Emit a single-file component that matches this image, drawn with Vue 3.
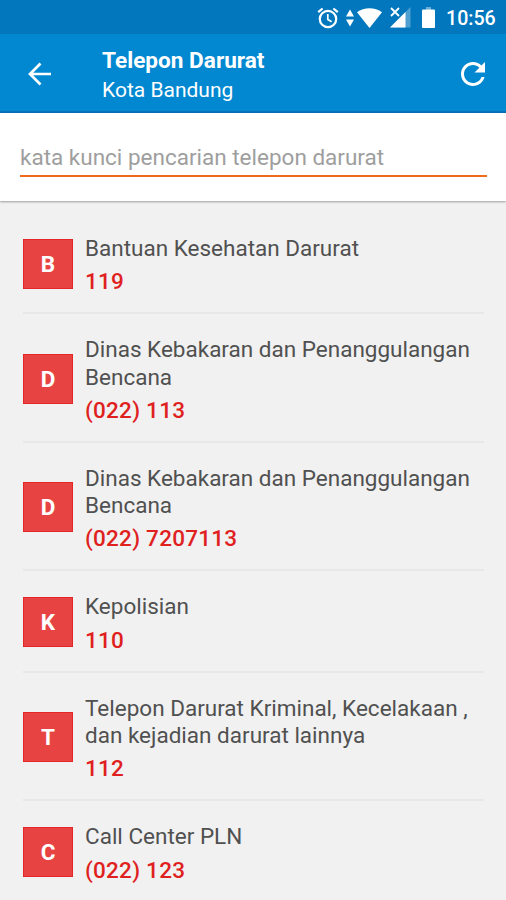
<template>
  <div class="screen">
    <div class="status-bar">
      <svg class="alarm" width="22" height="22" viewBox="0 0 22 22">
        <circle cx="11" cy="12" r="8.2" fill="none" stroke="#fff" stroke-width="2.2" />
        <path d="M1.2 5.2L5.6 1.5M20.8 5.2L16.4 1.5" stroke="#fff" stroke-width="2.2" />
        <path d="M10.8 7v5.4l3.8 2.3" fill="none" stroke="#fff" stroke-width="1.7" />
      </svg>
      <svg class="data" width="8" height="18" viewBox="0 0 8 18">
        <path d="M4 0.500L8 7.500H0zM4 17.500L8 10.500H0z" fill="#fff" />
      </svg>
      <svg class="wifi" width="25" height="20" viewBox="0 0 25 20">
        <path d="M0 4.2C7-1.1 18-1.1 25 4.2L12.5 20z" fill="#fff" />
      </svg>
      <svg class="signal" width="21" height="21" viewBox="0 0 21 21">
        <path d="M20.5 0V20.5H0z" fill="#fff" fill-opacity=".3" />
        <path d="M15.5 5V20.5H0z" fill="#fff" />
        <path d="M1 1l8 8M9 1l-8 8" stroke="#0277bd" stroke-width="4" />
        <path d="M1 1l8 8M9 1l-8 8" stroke="#fff" stroke-width="1.8" />
      </svg>
      <svg class="battery" width="13" height="21" viewBox="0 0 13 21">
        <path d="M4 0h5v3H4z" fill="#fff" fill-opacity=".4" />
        <path d="M1 2.500h11q1 0 1 1V20q0 1-1 1H1q-1 0-1-1V3.500q0-1 1-1z" fill="#fff" />
      </svg>
      <span class="time">10:56</span>
    </div>
    <header class="toolbar">
      <button class="back" aria-label="Kembali">
        <svg width="24" height="24" viewBox="0 0 24 24">
          <path d="M12.500 1.500L2 12l10.500 10.500M2 12h21" fill="none" stroke="#fff" stroke-width="2.700" />
        </svg>
      </button>
      <div class="heading">
        <h1>Telepon Darurat</h1>
        <p>Kota Bandung</p>
      </div>
      <button class="refresh" aria-label="Muat ulang">
        <svg width="24" height="24" viewBox="4 4 16 16">
          <path
            d="M17.650 6.350C16.200 4.900 14.210 4 12 4c-4.420 0-7.990 3.580-7.990 8s3.570 8 7.990 8c3.730 0 6.840-2.550 7.730-6h-2.080c-.820 2.330-3.040 4-5.650 4-3.310 0-6-2.690-6-6s2.690-6 6-6c1.660 0 3.140.690 4.220 1.780L13 11h7V4l-2.350 2.350z"
            fill="#fff"
          />
        </svg>
      </button>
    </header>
    <div class="search">
      <input v-model="keyword" type="text" placeholder="kata kunci pencarian telepon darurat" />
    </div>
    <ul class="list">
      <li v-for="(item, i) in filtered" :key="i">
        <span class="avatar">{{ item.name.charAt(0) }}</span>
        <div class="info">
          <div class="name">{{ item.name }}</div>
          <div class="phone">{{ item.phone }}</div>
        </div>
      </li>
    </ul>
  </div>
</template>

<script setup>
import { computed, ref } from 'vue'

const keyword = ref('')
const contacts = ref([
  { name: 'Bantuan Kesehatan Darurat', phone: '119' },
  { name: 'Dinas Kebakaran dan Penanggulangan Bencana', phone: '(022) 113' },
  { name: 'Dinas Kebakaran dan Penanggulangan Bencana', phone: '(022) 7207113' },
  { name: 'Kepolisian', phone: '110' },
  { name: 'Telepon Darurat Kriminal, Kecelakaan , dan kejadian darurat lainnya', phone: '112' },
  { name: 'Call Center PLN', phone: '(022) 123' },
])

const filtered = computed(() => {
  const key = keyword.value.toLowerCase()
  return contacts.value.filter((item) => item.name.toLowerCase().includes(key))
})
</script>

<style>
body {
  margin: 0;
  background: #f1f1f1;
}
</style>

<style scoped>
.screen {
  display: flex;
  flex-direction: column;
  height: 900px;
  overflow: hidden;
  background: #f1f1f1;
  font-family: Roboto, 'Liberation Sans', sans-serif;
}
.status-bar {
  display: flex;
  flex: none;
  align-items: center;
  justify-content: flex-end;
  box-sizing: border-box;
  height: 34px;
  padding: 1px 11px 0 0;
  background: #0277bd;
}
.data {
  margin-left: 7px;
}
.wifi {
  margin-left: 3px;
}
.signal {
  margin-left: 8px;
}
.battery {
  margin-left: 11px;
}
.time {
  width: 49px;
  margin-left: 11px;
  padding-top: 2px;
  color: #fff;
  font-size: 19.6px;
  font-weight: 500;
  line-height: 24px;
  white-space: nowrap;
}
.toolbar {
  display: flex;
  flex: none;
  align-items: center;
  box-sizing: border-box;
  height: 79px;
  padding: 2px 21px 0 28px;
  border-bottom: 2px solid #0870b8;
  background: #0288d1;
  color: #fff;
}
button {
  display: flex;
  padding: 0;
  border: 0;
  background: none;
}
.heading {
  flex: 1;
  margin-left: 50px;
  padding-top: 3px;
}
h1 {
  margin: 0;
  font-size: 22.6px;
  font-weight: 700;
  line-height: 29px;
}
.heading p {
  margin: 0;
  padding-top: 1px;
  font-size: 21px;
  line-height: 29px;
}
.search {
  flex: none;
  box-sizing: border-box;
  height: 88px;
  padding: 29px 19px 0 20px;
  background: #fff;
  box-shadow: 0 1px 2px rgba(0, 0, 0, 0.35);
}
input {
  display: block;
  box-sizing: border-box;
  width: 100%;
  height: 35px;
  padding: 0 0 3px;
  border: 0;
  border-bottom: 2px solid #f06a1c;
  outline: 0;
  background: none;
  color: #444;
  font-family: inherit;
  font-size: 22.5px;
}
input::placeholder {
  color: #9e9e9e;
  opacity: 1;
}
.list {
  margin: 0;
  padding: 12px 22px 0 23px;
  list-style: none;
}
li {
  display: flex;
  align-items: center;
  padding: 19px 0 17.15px;
  border-bottom: 2px solid #e7e7e7;
}
.avatar {
  flex: none;
  box-sizing: border-box;
  width: 50px;
  height: 50px;
  border: 1px solid #e52526;
  background: #e84343;
  color: #fff;
  font-size: 22.5px;
  font-weight: 700;
  line-height: 48px;
  text-align: center;
}
.info {
  flex: 1;
  margin-left: 12px;
  padding-top: 3px;
}
.name {
  color: #505050;
  font-size: 22.5px;
  line-height: 27.2px;
}
.phone {
  margin-top: 5px;
  color: #e01f1f;
  font-size: 22.5px;
  font-weight: 500;
  letter-spacing: 0.25px;
  line-height: 28px;
}
</style>
